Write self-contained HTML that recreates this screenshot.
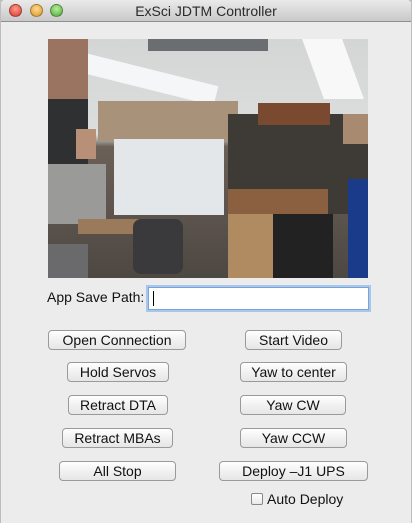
<!DOCTYPE html>
<html><head><style>
*{margin:0;padding:0;box-sizing:border-box}
body{width:412px;height:523px;background:#bdbdbd;font-family:"Liberation Sans",sans-serif;font-size:14px;color:#111;position:relative;overflow:hidden}
.win{position:absolute;left:1px;top:0;width:410px;height:523px;background:#ececec;border-radius:4px 4px 0 0;overflow:hidden}
.tb{position:absolute;left:0;top:0;width:410px;height:22px;background:linear-gradient(#eaeaea,#c9c9c9);border-bottom:1px solid #8f8f8f;text-align:center;line-height:23px;font-size:14px;color:#2a2a2a}
.dot{position:absolute;top:4px;width:13px;height:13px;border-radius:50%;border:1px solid rgba(0,0,0,.3)}
.b{position:absolute;height:20px;border:1px solid #9a9a9a;border-radius:4px;background:linear-gradient(#fff,#f1f1f1 50%,#e6e6e6);text-align:center;line-height:18px;font-size:14px;color:#111}
.p{position:absolute}
</style></head><body>
<div class="win">
<div class="tb">ExSci JDTM Controller
<div class="dot" style="left:8px;background:radial-gradient(circle at 50% 35%,#ff9a8a,#d8382c)"></div>
<div class="dot" style="left:29px;background:radial-gradient(circle at 50% 35%,#ffd98a,#d9962a)"></div>
<div class="dot" style="left:49px;background:radial-gradient(circle at 50% 35%,#b8ee9a,#4ea83a)"></div>
</div>
<div class="p" style="left:47px;top:39px;width:320px;height:239px;overflow:hidden;background:linear-gradient(#d4d6d6 0%,#dcdede 40%,#6a6058 45%,#4e4842 100%)">
<div class="p" style="left:100px;top:0;width:120px;height:12px;background:#6a6e70"></div>
<div class="p" style="left:30px;top:30px;width:140px;height:20px;background:#f4f6f8;transform:rotate(14deg)"></div>
<div class="p" style="left:265px;top:0;width:40px;height:60px;background:#f8f8f8;transform:skewX(20deg)"></div>
<div class="p" style="left:50px;top:62px;width:140px;height:40px;background:#a8927a"></div>
<div class="p" style="left:66px;top:100px;width:110px;height:76px;background:#e4e7e9"></div>
<div class="p" style="left:180px;top:75px;width:140px;height:100px;background:#3e3a36"></div>
<div class="p" style="left:210px;top:64px;width:72px;height:22px;background:#7a4a30"></div>
<div class="p" style="left:295px;top:75px;width:25px;height:30px;background:#a88a70"></div>
<div class="p" style="left:180px;top:150px;width:100px;height:25px;background:#8a6040"></div>
<div class="p" style="left:180px;top:175px;width:60px;height:64px;background:#b08a60"></div>
<div class="p" style="left:225px;top:175px;width:60px;height:64px;background:#222"></div>
<div class="p" style="left:300px;top:140px;width:20px;height:99px;background:#1a3a8a"></div>
<div class="p" style="left:0;top:0;width:40px;height:60px;background:#9a7460"></div>
<div class="p" style="left:0;top:60px;width:40px;height:90px;background:#2e3032"></div>
<div class="p" style="left:0;top:125px;width:58px;height:60px;background:#9a9a98"></div>
<div class="p" style="left:28px;top:90px;width:20px;height:30px;background:#b89078"></div>
<div class="p" style="left:30px;top:180px;width:70px;height:15px;background:#9a7a5a"></div>
<div class="p" style="left:85px;top:180px;width:50px;height:55px;background:#3a3a3c;border-radius:8px"></div>
<div class="p" style="left:0;top:205px;width:40px;height:34px;background:#6a6a6c"></div>
</div>
<div class="p" style="left:46px;top:289px">App Save Path:</div>
<div class="p" style="left:147px;top:287px;width:221px;height:23px;background:#fff;border:1px solid #7aa3d6;box-shadow:0 0 0 2px #a9c6ec"><div class="p" style="left:4px;top:3px;width:1px;height:15px;background:#000"></div></div>
<div class="b" style="left:47px;top:330px;width:138px">Open Connection</div>
<div class="b" style="left:244px;top:330px;width:97px">Start Video</div>
<div class="b" style="left:66px;top:362px;width:102px">Hold Servos</div>
<div class="b" style="left:239px;top:362px;width:107px">Yaw to center</div>
<div class="b" style="left:67px;top:395px;width:100px">Retract DTA</div>
<div class="b" style="left:239px;top:395px;width:106px">Yaw CW</div>
<div class="b" style="left:61px;top:428px;width:111px">Retract MBAs</div>
<div class="b" style="left:239px;top:428px;width:107px">Yaw CCW</div>
<div class="b" style="left:58px;top:461px;width:117px">All Stop</div>
<div class="b" style="left:218px;top:461px;width:149px">Deploy –J1 UPS</div>
<div class="p" style="left:250px;top:493px;width:12px;height:12px;border:1px solid #888;border-radius:2px;background:linear-gradient(#fff,#e8e8e8)"></div>
<div class="p" style="left:266px;top:491px">Auto Deploy</div>
</div>
</body></html>
